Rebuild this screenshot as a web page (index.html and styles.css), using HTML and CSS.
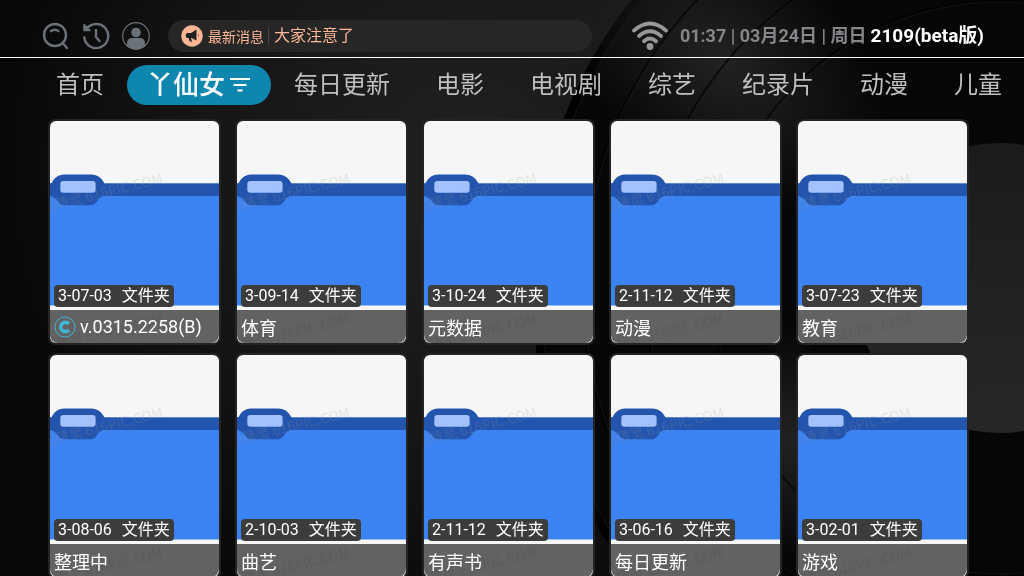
FILE: index.html
```html
<!DOCTYPE html>
<html lang="zh-CN">
  <head>
    <meta charset="UTF-8" />
    <meta name="viewport" content="width=device-width, initial-scale=1.0" />
    <title>丫仙女</title>
    <link rel="stylesheet" href="styles.css">
  </head>
  <body>
    <!-- vinyl record backdrop -->
    <svg class="backdrop" viewBox="0 0 1024 576" preserveAspectRatio="xMidYMid slice" aria-hidden="true">
      <defs>
        <radialGradient id="glow" gradientUnits="userSpaceOnUse" cx="470" cy="170" r="470">
          <stop offset="0" stop-color="#212121" />
          <stop offset="0.6" stop-color="#151515" />
          <stop offset="1" stop-color="#080808" />
        </radialGradient>
        <radialGradient id="sheen">
          <stop offset="0" stop-color="#222" />
          <stop offset="1" stop-color="#222" stop-opacity="0" />
        </radialGradient>
        <linearGradient id="label" x1="0" y1="0" x2="0" y2="1">
          <stop offset="0" stop-color="#1b1b1b" />
          <stop offset="1" stop-color="#272727" />
        </linearGradient>
      </defs>
      <rect width="1024" height="576" fill="url(#glow)" />
      <circle cx="1000" cy="288" r="464" fill="#060606" stroke="#000" stroke-width="8" />
      <ellipse cx="720" cy="60" rx="190" ry="120" fill="url(#sheen)" transform="rotate(38 720 60)" />
      <ellipse cx="789" cy="440" rx="40" ry="120" fill="url(#sheen)" />
      <g fill="none" stroke="#000" stroke-opacity="0.6" stroke-width="2">
        <circle cx="1000" cy="288" r="418" />
        <circle cx="1000" cy="288" r="355" />
        <circle cx="1000" cy="288" r="288" />
      </g>
      <g fill="none" stroke="#1f1f1f" stroke-opacity="0.5">
        <circle cx="1000" cy="288" r="459" />
        <circle cx="1000" cy="288" r="416" />
        <circle cx="1000" cy="288" r="353" />
        <circle cx="1000" cy="288" r="286" />
      </g>
      <circle cx="1000" cy="288" r="145" fill="url(#label)" />
    </svg>

    <!-- shared folder cover -->
    <svg class="sprite" aria-hidden="true">
      <symbol id="folder" viewBox="0 0 169 222" preserveAspectRatio="none">
        <rect width="169" height="222" fill="#f6f6f6" />
        <rect y="62.5" width="169" height="122" fill="#3b82f2" />
        <rect y="62.5" width="169" height="12.5" fill="#2355ae" />
        <path d="M0 62.5H1.5C4 57 8 53.5 14 53.5H41C48 53.5 51.5 57 54.5 62.5V75C50 75.5 49 78 46.5 81C44.5 83.5 43 84.3 40 84.3H15C11 84.3 9.5 82.5 7 79.5C4.5 76.5 3 75.5 0 75Z" fill="#2355ae" />
        <rect x="10.3" y="60" width="35.3" height="11.7" rx="3" fill="#a2c1ff" />
        <g class="watermark">
          <text transform="translate(-7 92) rotate(-14)">图精灵 616PIC.COM</text>
          <text transform="translate(-7 232) rotate(-14)">图精灵 616PIC.COM</text>
        </g>
      </symbol>
    </svg>

    <header class="topbar">
      <div class="tools">
        <button class="tool" type="button" aria-label="搜索">
          <svg width="28" height="28" viewBox="0 0 28 28" fill="none" stroke="#6b7178" stroke-width="2.4" stroke-linecap="round">
            <circle cx="13" cy="13" r="11" />
            <path d="M21 21.5L25 26M9 9.2Q12.5 6.3 16.3 9" />
          </svg>
        </button>
        <button class="tool" type="button" aria-label="历史">
          <svg width="28" height="28" viewBox="0 0 28 28" fill="none" stroke="#6b7178" stroke-width="2.4" stroke-linecap="round" stroke-linejoin="round">
            <path d="M4.5 7A12 12 0 1 1 2.3 15.5" />
            <path d="M14 8V15L17.5 19" />
            <path d="M2 2.5V8.500H8Z" fill="#6b7178" stroke-width="1.5" />
          </svg>
        </button>
        <button class="tool" type="button" aria-label="我的">
          <svg width="28" height="28" viewBox="0 0 28 28">
            <circle cx="14" cy="14" r="13.3" fill="none" stroke="#6b7178" stroke-width="1.2" />
            <circle cx="14" cy="10.5" r="4.8" fill="#6b7178" />
            <path d="M5 24V21.500Q5 16 10 16H18Q23 16 23 21.500V24Q19 27.500 14 27.500T5 24Z" fill="#6b7178" />
          </svg>
        </button>
      </div>

      <a class="notice" href="#">
        <svg width="22" height="22" viewBox="0 0 22 22" aria-hidden="true">
          <circle cx="11" cy="11" r="10.7" fill="#fdb797" />
          <path d="M15.500 4.500V15.500L10.500 13H10L11 17L8.500 16L7.500 13H6.500Q4.700 13 4.700 10.500T6.500 8H10Z" fill="#222" />
          <path d="M17 8.500Q18.500 10 17 11.700Z" fill="#222" />
        </svg>
        <span class="notice-tag">最新消息</span>
        <span class="notice-text">大家注意了</span>
      </a>

      <div class="status">
        <svg class="wifi" width="38" height="30" viewBox="0 0 38 30" fill="none" stroke="#97979a" stroke-width="3.8" stroke-linecap="round" aria-label="WiFi">
          <path d="M3 9.500Q19 -4.500 35 9.500" />
          <path d="M8 15Q19 5.500 30 15" />
          <path d="M13 20.200Q19 15 25 20.200" />
          <circle cx="19" cy="25.5" r="3.4" fill="#97979a" stroke="none" />
        </svg>
        <time class="clock">01:37 | 03月24日 | 周日</time>
        <span class="version">2109(beta版)</span>
      </div>
    </header>

    <nav class="tabs">
      <a class="tab" href="#">首页</a>
      <a class="tab active" href="#">丫仙女
        <svg width="22" height="16" viewBox="0 0 22 16" stroke="#fff" stroke-width="2" aria-hidden="true">
          <path d="M1 2H21M4.500 8H17.500M8.500 13.500H13.500" />
        </svg>
      </a>
      <a class="tab" href="#">每日更新</a>
      <a class="tab" href="#">电影</a>
      <a class="tab" href="#">电视剧</a>
      <a class="tab" href="#">综艺</a>
      <a class="tab" href="#">纪录片</a>
      <a class="tab" href="#">动漫</a>
      <a class="tab" href="#">儿童</a>
    </nav>

    <main class="grid">
      <a class="card" href="#">
        <svg class="cover"><use href="#folder" /></svg>
        <span class="badge"><span>3-07-03</span><span>文件夹</span></span>
        <span class="title">
          <svg width="22" height="22" viewBox="0 0 22 22" fill="none" stroke="#43b3d6" aria-hidden="true">
            <circle cx="11" cy="11" r="10" />
            <path d="M14.8 8A4.6 4.6 0 1 0 14.8 14" stroke-width="3.6" />
          </svg>
          v.0315.2258(B)
        </span>
      </a>
      <a class="card" href="#">
        <svg class="cover"><use href="#folder" /></svg>
        <span class="badge"><span>3-09-14</span><span>文件夹</span></span>
        <span class="title">体育</span>
      </a>
      <a class="card" href="#">
        <svg class="cover"><use href="#folder" /></svg>
        <span class="badge"><span>3-10-24</span><span>文件夹</span></span>
        <span class="title">元数据</span>
      </a>
      <a class="card" href="#">
        <svg class="cover"><use href="#folder" /></svg>
        <span class="badge"><span>2-11-12</span><span>文件夹</span></span>
        <span class="title">动漫</span>
      </a>
      <a class="card" href="#">
        <svg class="cover"><use href="#folder" /></svg>
        <span class="badge"><span>3-07-23</span><span>文件夹</span></span>
        <span class="title">教育</span>
      </a>
      <a class="card" href="#">
        <svg class="cover"><use href="#folder" /></svg>
        <span class="badge"><span>3-08-06</span><span>文件夹</span></span>
        <span class="title">整理中</span>
      </a>
      <a class="card" href="#">
        <svg class="cover"><use href="#folder" /></svg>
        <span class="badge"><span>2-10-03</span><span>文件夹</span></span>
        <span class="title">曲艺</span>
      </a>
      <a class="card" href="#">
        <svg class="cover"><use href="#folder" /></svg>
        <span class="badge"><span>2-11-12</span><span>文件夹</span></span>
        <span class="title">有声书</span>
      </a>
      <a class="card" href="#">
        <svg class="cover"><use href="#folder" /></svg>
        <span class="badge"><span>3-06-16</span><span>文件夹</span></span>
        <span class="title">每日更新</span>
      </a>
      <a class="card" href="#">
        <svg class="cover"><use href="#folder" /></svg>
        <span class="badge"><span>3-02-01</span><span>文件夹</span></span>
        <span class="title">游戏</span>
      </a>
    </main>
  </body>
</html>
```
FILE: styles.css
```css
* {
  box-sizing: border-box;
}

body {
  font-family: Roboto, "Noto Sans CJK SC", sans-serif;
  display: flex;
  flex-direction: column;
  height: 100vh;
  margin: 0;
  background: #080808;
  color: #fff;
}

a {
  color: inherit;
  text-decoration: none;
}

.backdrop {
  position: fixed;
  inset: 0;
  width: 100%;
  height: 100%;
  z-index: -1;
}

.sprite {
  position: absolute;
  width: 0;
  height: 0;
}

.topbar {
  display: flex;
  flex: none;
  align-items: center;
  padding: 15px 40px 0 42px;
  height: 58px;
  border-bottom: 1px solid #fff;
}

.tools {
  display: flex;
  gap: 12px;
}

.tool {
  display: flex;
  padding: 0;
  border: 0;
  background: none;
  cursor: pointer;
}

.notice {
  display: flex;
  align-items: center;
  flex: 0 1 424px;
  height: 32px;
  margin-left: 18px;
  padding: 0 13px;
  border-radius: 16px;
  background: #262626;
  color: #fdb797;
  white-space: nowrap;
}

.notice-tag {
  margin: 0 4px 0 5px;
  font-size: 14px;
}

.notice-text {
  padding-left: 5px;
  font-size: 16px;
  line-height: 18px;
  border-left: 1px solid #484848;
}

.status {
  display: flex;
  align-items: center;
  margin-left: auto;
  font-size: 18px;
  font-weight: bold;
  line-height: 26px;
  white-space: nowrap;
}

.wifi {
  margin-right: 11px;
}

.clock {
  margin-right: 4px;
  color: #85868a;
}

.version {
  font-size: 19px;
}

.tabs {
  display: flex;
  flex: none;
  align-items: center;
  height: 54px;
  padding: 0 33px;
  overflow: hidden;
  white-space: nowrap;
}

.tab {
  flex: none;
  padding: 0 23px;
  font-size: 24px;
  line-height: 40px;
  color: #bfbfbf;
}

.tab.active {
  display: flex;
  align-items: center;
  gap: 4px;
  padding: 0 20px;
  border-radius: 20px;
  background: #0f86ad;
  color: #fff;
  font-size: 26px;
  font-weight: 500;
}

.grid {
  display: grid;
  flex: 1;
  grid-template-columns: repeat(5, 1fr);
  align-content: start;
  gap: 12px 18px;
  min-height: 0;
  padding: 9px 57px 0 50px;
  overflow-y: auto;
  scrollbar-width: none;
}

.card {
  position: relative;
  display: flex;
  flex-direction: column;
  justify-content: flex-end;
  aspect-ratio: 169 / 222;
  border-radius: 6px;
  box-shadow: 0 0 0 2px #242424;
}

.cover {
  position: absolute;
  inset: 0;
  width: 100%;
  height: 100%;
  border-radius: 6px;
}

.watermark {
  font-family: "Noto Sans CJK SC", sans-serif;
  font-size: 14px;
  fill: #999;
  fill-opacity: 0.2;
}

.badge {
  position: relative;
  display: flex;
  align-self: flex-start;
  gap: 10px;
  margin: 0 0 3px 4px;
  padding: 0 4px;
  border-radius: 4px;
  background: #3c3c3c;
  font-size: 16px;
  line-height: 22px;
}

.title {
  position: relative;
  display: flex;
  align-items: center;
  gap: 4px;
  height: 33px;
  padding: 0 4px;
  border-radius: 0 0 8px 8px;
  background: rgba(0, 0, 0, 0.6);
  font-size: 18px;
  white-space: nowrap;
}
```
